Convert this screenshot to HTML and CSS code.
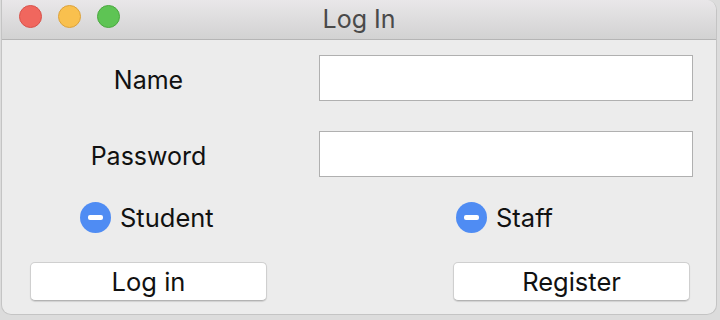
FILE: index.html
```html
<!DOCTYPE html>
<html>
<head>
<meta charset="utf-8">
<link rel="stylesheet" href="styles.css">
</head>
<body>
<div class="window">
  <div class="titlebar">
    <div class="lights">
      <span class="light red"></span>
      <span class="light yellow"></span>
      <span class="light green"></span>
    </div>
    <div class="title">Log In</div>
  </div>
  <div class="content">
    <div class="form">
      <label class="label">Name</label>
      <div class="input"></div>
      <label class="label">Password</label>
      <div class="input"></div>
    </div>
    <div class="radios">
      <div class="radio"><span class="dot"><span class="dash"></span></span><span class="rtext">Student</span></div>
      <div class="radio"><span class="dot"><span class="dash"></span></span><span class="rtext">Staff</span></div>
    </div>
    <div class="buttons">
      <div class="btn">Log in</div>
      <div class="btn">Register</div>
    </div>
  </div>
</div>
</body>
</html>
```
FILE: styles.css
```css
html, body {
  margin: 0;
  padding: 0;
  background: #dcdcdc;
  width: 720px;
  height: 320px;
  overflow: hidden;
}
body {
  font-family: "Inter", "Liberation Sans", sans-serif;
}
.window {
  margin-left: 1px;
  width: 716px;
  height: 315px;
  background: #ececec;
  border: 1px solid #c4c4c4;
  border-top: none;
  border-radius: 0 10px 10px 10px;
  box-sizing: border-box;
  overflow: hidden;
  display: flex;
  flex-direction: column;
}
.titlebar {
  height: 39px;
  flex: none;
  background: linear-gradient(#e9e7e9, #d2d2d2);
  border-bottom: 1px solid #b5b5b5;
  position: relative;
  display: flex;
  align-items: center;
  justify-content: center;
}
.lights {
  position: absolute;
  left: 17px;
  top: 5px;
  display: flex;
  gap: 16px;
}
.light {
  width: 23px;
  height: 23px;
  border-radius: 50%;
  box-sizing: border-box;
}
.red { background: #f0675e; border: 1px solid #d8524b; }
.yellow { background: #f9c04e; border: 1px solid #dca23b; }
.green { background: #5ec454; border: 1px solid #4aa83f; }
.title {
  font-size: 25px;
  color: #4a4a4a;
  margin-left: 0;
  margin-top: -1px;
}
.content {
  flex: 1;
  padding: 15px 0 0 28px;
}
.form {
  display: grid;
  grid-template-columns: 237px 374px;
  grid-auto-rows: 46px;
  column-gap: 52px;
  row-gap: 30px;
}
.label {
  display: flex;
  align-items: center;
  justify-content: center;
  font-size: 25px;
  color: #111;
  padding-top: 4px;
}
.input {
  background: #fff;
  border: 1px solid #b0b0b0;
  box-sizing: border-box;
}
.radios {
  display: grid;
  grid-template-columns: 376px auto;
  margin: 25px 0 0 50px;
  height: 31px;
}
.radio {
  display: flex;
  align-items: center;
  gap: 9px;
}
.dot {
  width: 31px;
  height: 31px;
  border-radius: 50%;
  background: #4f8cf3;
  display: flex;
  align-items: center;
  justify-content: center;
}
.dash {
  width: 15px;
  height: 5px;
  border-radius: 2px;
  background: #fff;
}
.rtext {
  font-size: 25.5px;
  color: #111;
}
.buttons {
  display: flex;
  gap: 186px;
  margin-top: 29px;
}
.btn {
  width: 237px;
  height: 39px;
  box-sizing: border-box;
  background: #fff;
  border: 1px solid #cfcfcf;
  border-bottom-color: #b3b3b3;
  border-radius: 5px;
  box-shadow: 0 1px 1px rgba(0,0,0,0.12);
  display: flex;
  align-items: center;
  justify-content: center;
  font-size: 25.5px;
  color: #111;
}
```
